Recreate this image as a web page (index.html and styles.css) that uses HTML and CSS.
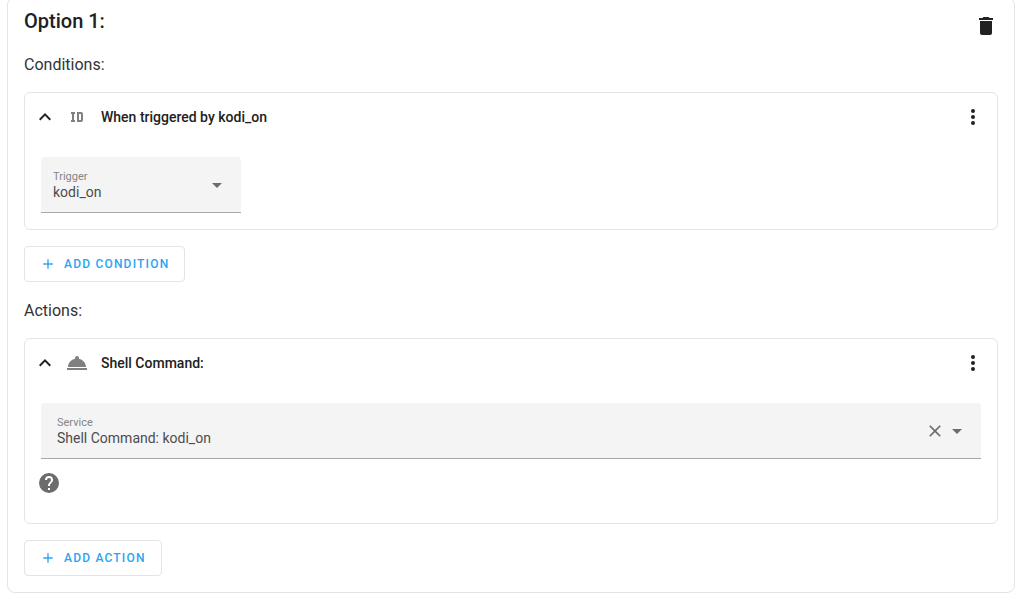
FILE: index.html
```
<!DOCTYPE html>
<html lang="en">
<head>
    <meta charset="UTF-8">
    <meta name="viewport" content="width=device-width, initial-scale=1.0">
    <title>Option 1</title>
    <link rel="stylesheet" href="styles.css">
</head>
<body>
    <main class="option">
        <div class="option-header">
            <h2>Option 1:</h2>
            <button class="icon-button" type="button" aria-label="Delete option">
                <svg viewBox="0 0 24 24"><path d="M19 4h-3.5l-1-1h-5l-1 1H5v2h14M6 19a2 2 0 0 0 2 2h8a2 2 0 0 0 2-2V7H6v12z"/></svg>
            </button>
        </div>

        <!-- Conditions -->
        <h3>Conditions:</h3>
        <section class="card">
            <div class="card-header">
                <button class="toggle" type="button" aria-expanded="true">
                    <svg class="chevron" viewBox="0 0 24 24"><path d="M7.41 15.41L12 10.83l4.59 4.58L18 14l-6-6-6 6z"/></svg>
                    <svg class="kind" viewBox="0 0 24 24"><path d="M10 7v2H9v6h1v2H6v-2h1V9H6V7h4m6 0a2 2 0 0 1 2 2v6a2 2 0 0 1-2 2h-4V7h4m0 2h-2v6h2V9z"/></svg>
                    <span>When triggered by kodi_on</span>
                </button>
                <button class="icon-button" type="button" aria-label="Condition menu">
                    <svg viewBox="0 0 24 24"><path d="M12 16a2 2 0 1 1 0 4 2 2 0 0 1 0-4m0-6a2 2 0 1 1 0 4 2 2 0 0 1 0-4m0-6a2 2 0 1 1 0 4 2 2 0 0 1 0-4z"/></svg>
                </button>
            </div>
            <div class="card-content">
                <div class="field field-select">
                    <label for="trigger">Trigger</label>
                    <select id="trigger">
                        <option selected>kodi_on</option>
                    </select>
                    <svg class="arrow" viewBox="0 0 24 24"><path d="M7 10l5 5 5-5z"/></svg>
                </div>
            </div>
        </section>
        <button class="add-button" type="button">
            <svg viewBox="0 0 24 24"><path d="M19 13h-6v6h-2v-6H5v-2h6V5h2v6h6v2z"/></svg>
            ADD CONDITION
        </button>

        <!-- Actions -->
        <h3>Actions:</h3>
        <section class="card">
            <div class="card-header">
                <button class="toggle" type="button" aria-expanded="true">
                    <svg class="chevron" viewBox="0 0 24 24"><path d="M7.41 15.41L12 10.83l4.59 4.58L18 14l-6-6-6 6z"/></svg>
                    <svg class="kind" viewBox="0 0 24 24"><path d="M12 5a2 2 0 0 1 2 2c0 .24-.04.47-.12.69C17.95 8.5 21 11.91 21 16H3c0-4.09 3.05-7.5 7.12-8.31A2 2 0 0 1 10 7a2 2 0 0 1 2-2m10 14H2v-2h20v2z"/></svg>
                    <span>Shell Command:</span>
                </button>
                <button class="icon-button" type="button" aria-label="Action menu">
                    <svg viewBox="0 0 24 24"><path d="M12 16a2 2 0 1 1 0 4 2 2 0 0 1 0-4m0-6a2 2 0 1 1 0 4 2 2 0 0 1 0-4m0-6a2 2 0 1 1 0 4 2 2 0 0 1 0-4z"/></svg>
                </button>
            </div>
            <div class="card-content">
                <div class="field field-combo">
                    <label for="service">Service</label>
                    <input id="service" type="text" value="Shell Command: kodi_on">
                    <button class="clear" type="button" aria-label="Clear">
                        <svg viewBox="0 0 24 24"><path d="M19 6.41L17.59 5 12 10.59 6.41 5 5 6.41 10.59 12 5 17.59 6.41 19 12 13.41 17.59 19 19 17.59 13.41 12z"/></svg>
                    </button>
                    <svg class="arrow" viewBox="0 0 24 24"><path d="M7 10l5 5 5-5z"/></svg>
                </div>
                <button class="icon-button help" type="button" aria-label="Help">
                    <svg viewBox="0 0 24 24"><path d="M15.07 11.25l-.9.92C13.45 12.89 13 13.5 13 15h-2v-.5c0-1.11.45-2.11 1.17-2.83l1.24-1.26c.37-.36.59-.86.59-1.41a2 2 0 0 0-4 0H8a4 4 0 1 1 8 0c0 .88-.36 1.67-.93 2.25M13 19h-2v-2h2M12 2a10 10 0 1 0 0 20 10 10 0 0 0 0-20z"/></svg>
                </button>
            </div>
        </section>
        <button class="add-button" type="button">
            <svg viewBox="0 0 24 24"><path d="M19 13h-6v6h-2v-6H5v-2h6V5h2v6h6v2z"/></svg>
            ADD ACTION
        </button>
    </main>
</body>
</html>
```
FILE: styles.css
```
* {
    box-sizing: border-box;
}

body {
    margin: 0;
    background: #fff;
    color: #212121;
    font-family: Roboto, "Liberation Sans", sans-serif;
    font-size: 16px;
}

button, input, select {
    font: inherit;
    color: inherit;
    background: none;
    border: none;
    margin: 0;
    padding: 0;
}

button {
    cursor: pointer;
}

svg {
    display: block;
    width: 24px;
    height: 24px;
    fill: currentColor;
}

.option {
    margin: -3px 9px 8px 7px;
    padding: 0 16px 16px;
    border: 1px solid #e4e4e4;
    border-radius: 8px;
}

.option-header {
    display: flex;
    justify-content: space-between;
    height: 54px;
    margin-right: -12px;
}

h2 {
    margin: 11px 0 0;
    font-size: 20px;
    line-height: 24px;
    font-weight: 500;
}

.icon-button {
    display: flex;
    align-items: center;
    justify-content: center;
    width: 48px;
    height: 48px;
}

.option-header .icon-button {
    margin-top: 4px;
}

h3 {
    margin: 0 0 14px;
    font-size: 16px;
    line-height: 26px;
    font-weight: 400;
    color: #333;
}

.card {
    border: 1px solid #e4e4e4;
    border-radius: 6px;
}

.card-header {
    display: flex;
    align-items: center;
}

.toggle {
    flex: 1;
    display: flex;
    align-items: center;
    height: 48px;
    padding-left: 8px;
    font-size: 14px;
    font-weight: 500;
    text-align: left;
}

.kind {
    margin: 0 12px 0 8px;
    color: #808080;
}

.card-content {
    padding: 16px;
}

.field {
    position: relative;
    display: flex;
    align-items: center;
    height: 56px;
    background: #f4f4f4;
    border-bottom: 1px solid #a8a8a8;
    border-radius: 4px 4px 0 0;
    color: #4c4c4c;
}

.field label {
    position: absolute;
    top: 13px;
    font-size: 11px;
    line-height: 14px;
    color: #858585;
}

.field select,
.field input {
    appearance: none;
    width: 100%;
    height: 100%;
    padding: 14px 48px 0 12px;
    font-size: 14px;
    outline: none;
}

.field-select {
    width: 200px;
}

.field-select label {
    left: 12px;
}

.field-combo label {
    left: 16px;
}

.field-combo input {
    flex: 1;
    padding: 14px 0 0 16px;
}

.arrow,
.clear,
.help {
    color: #6c6c6c;
}

.field-select .arrow {
    position: absolute;
    right: 12px;
    pointer-events: none;
}

.field-combo .arrow {
    margin-right: 12px;
}

.clear svg {
    width: 20px;
    height: 20px;
}

.help {
    margin-left: -16px;
}

.add-button {
    display: flex;
    align-items: center;
    gap: 8px;
    height: 36px;
    margin: 16px 0;
    padding: 0 15px;
    border: 1px solid #e4e4e4;
    border-radius: 4px;
    color: #29a5f2;
    font-size: 12px;
    font-weight: 500;
    letter-spacing: 0.1em;
}

.add-button svg {
    width: 16px;
    height: 16px;
}

.add-button:last-child {
    margin-bottom: 0;
}
```
